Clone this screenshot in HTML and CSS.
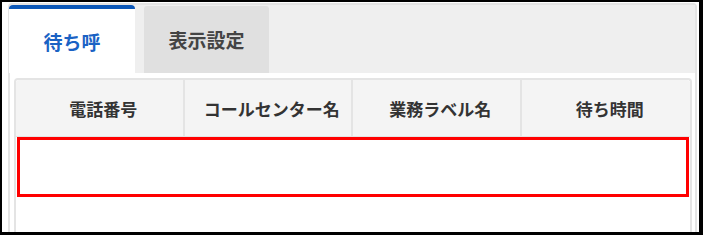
FILE: index.html
```html
<!DOCTYPE html>
<html lang="ja">
<head>
<meta charset="utf-8">
<title>待ち呼</title>
<link rel="stylesheet" href="styles.css">
</head>
<body>
<div class="frame">
  <div class="panel">
    <div class="tabs">
      <div class="tab tab-active">待ち呼</div>
      <div class="tab tab-idle">表示設定</div>
    </div>
    <div class="panel-body">
      <div class="grid-table">
        <div class="thead">
          <div class="th">電話番号</div>
          <div class="th">コールセンター名</div>
          <div class="th">業務ラベル名</div>
          <div class="th">待ち時間</div>
        </div>
        <div class="row-highlight"></div>
      </div>
    </div>
  </div>
</div>
</body>
</html>
```
FILE: styles.css
```css
* { box-sizing: border-box; }
html, body { margin: 0; padding: 0; background: #fff; }
body {
  font-family: "Noto Sans CJK JP", "Noto Sans", sans-serif;
  width: 703px;
  height: 235px;
  overflow: hidden;
}
.frame {
  width: 703px;
  height: 235px;
  border-style: solid;
  border-color: #000;
  border-width: 2px 4px 3px 2px;
  display: flex;
  flex-direction: column;
  background: #fff;
}
.panel {
  margin: 1px 2px 0 6px;
  flex: 1;
  border: 2px solid #e4e4e4;
  border-bottom: none;
  border-radius: 4px 4px 0 0;
  display: flex;
  flex-direction: column;
}
.tabs {
  height: 68px;
  background: #efefef;
  display: flex;
  align-items: flex-end;
}
.tab {
  width: 125px;
  display: flex;
  align-items: center;
  justify-content: center;
  font-size: 19px;
  font-weight: 700;
}
.tab-active {
  height: 68px;
  width: 126px;
  margin-left: -1px;
  background: #fff;
  border-top: 4px solid #0b57b8;
  border-radius: 4px 4px 0 0;
  color: #1a62c4;
}
.tab-idle {
  height: 67px;
  margin-left: 9px;
  background: #e0e0e0;
  color: #444;
  border-radius: 3px 3px 0 0;
}
.panel-body {
  flex: 1;
  padding: 5px 3px 0 4px;
  display: flex;
  flex-direction: column;
  background: #fff;
}
.grid-table {
  flex: 1;
  border: 2px solid #e4e4e4;
  border-bottom: none;
  border-radius: 4px 4px 0 0;
}
.thead {
  height: 57px;
  background: #f4f4f4;
  border-bottom: 1px solid #e4e4e4;
  display: grid;
  grid-template-columns: repeat(4, 1fr);
  border-radius: 3px 3px 0 0;
}
.th {
  display: flex;
  align-items: center;
  justify-content: center;
  padding-left: 8px;
  font-size: 17px;
  font-weight: 700;
  color: #333;
}
.th:not(:last-child) {
  border-right: 2px solid #e4e4e4;
}
.row-highlight {
  margin: 0 1px;
  height: 60px;
  border: 3px solid #ff0000;
}
```
